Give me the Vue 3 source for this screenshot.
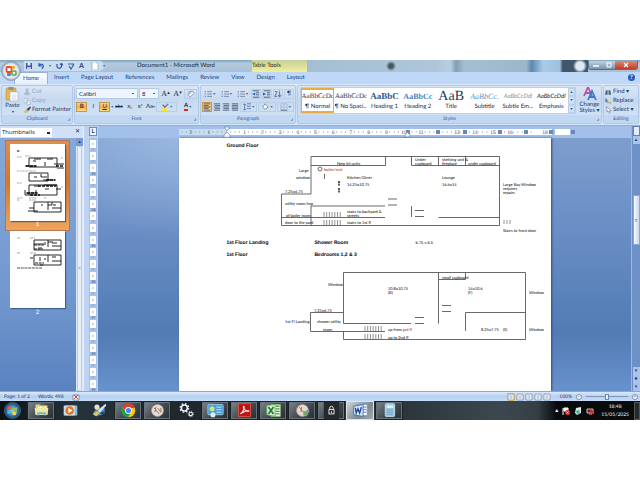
<script setup>
const tabs = ['Home', 'Insert', 'Page Layout', 'References', 'Mailings', 'Review', 'View', 'Design', 'Layout']

const styles = [
  { name: '¶ Normal', sample: 'AaBbCcDc', kind: 'plain', active: true },
  { name: '¶ No Spaci...', sample: 'AaBbCcDc', kind: 'plain' },
  { name: 'Heading 1', sample: 'AaBbC', kind: 'head1' },
  { name: 'Heading 2', sample: 'AaBbCc', kind: 'head2' },
  { name: 'Title', sample: 'AaB', kind: 'title' },
  { name: 'Subtitle', sample: 'AaBbCc.', kind: 'subtitle' },
  { name: 'Subtle Em...', sample: 'AaBbCcDdl', kind: 'subtle' },
  { name: 'Emphasis', sample: 'AaBbCcDdl', kind: 'emphasis' }
]

const range = (n) => Array.from({ length: n }, (_, i) => i)
const rulerNumbers = range(10).map((i) => ({ x: 48 + (i + 1) * 17.7, n: i + 1 }))
const rulerTail = [
  { x: 242, n: 11 }, { x: 278, n: 13 }, { x: 296, n: 14 }, { x: 314, n: 15 }, { x: 331, n: 16 }, { x: 366, n: 18 }
]
const rulerStops = [229, 259, 286, 321, 347, 372, 394]
const rulerTicks = range(80).map((i) => 3 + i * 4.42)

const verticalTicks = range(22).map((i) => ({ y: 2 + i * 12, n: i % 3 === 2 ? Math.floor(i / 3) + 13 : '' }))

const stairs = (x) => range(7).map((i) => x + i * 2.7)

const apps = [
  { name: 'File Explorer', lit: true, icon: '<path d="M3 3h5l1 1h8v11H3z" fill="#e9d98c"/><path d="M4 5h11v4H4z" fill="#fdf8d0"/><path d="M2 7h16l-1 8H3z" fill="#f3e6a0"/><path d="M5 12h10v4h-2v-2H7v2H5z" fill="#65b9dc"/><path d="M5 2v5M8 2v4M12 3v4" stroke="#8ccb74"/>' },
  { name: 'Media Player', icon: '<rect x="4" y="4" width="14" height="12" rx="1" fill="#8ebbd4"/><rect x="2" y="4" width="13" height="12" rx="1" fill="#c8dde8"/><circle cx="9" cy="10" r="5" fill="#e77421"/><path d="M7.500 7l5 3-5 3z" fill="#fff"/>' },
  { name: 'Paint Tools', icon: '<path d="M3 12q5-7 13-5v6q-7 5-13 2z" fill="#548bc0"/><path d="M2 14l5-3 3 2-4 4z" fill="#e8c64b"/><path d="M8 10L17 2l1 2-8 9z" fill="#d8e5f1"/><circle cx="7" cy="6" r="3" fill="#e8e3c5"/><path d="M10 13l6-2-2 4z" fill="#23456d"/>' },
  { name: 'Chrome', lit: true, icon: '<circle cx="10" cy="10" r="8" fill="#fbc116"/><path d="M3 6A8 8 0 0 1 17.500 7H10a3 3 0 0 0-3 4z" fill="#e23a2e"/><path d="M3 6A8 8 0 0 0 9.500 18l3.500-6H7z" fill="#229e4b"/><circle cx="10" cy="10" r="4" fill="#fff"/><circle cx="10" cy="10" r="3" fill="#4285f4"/>' },
  { name: 'Designer', lit: true, icon: '<circle cx="10" cy="10" r="7" fill="#e9e0d7" stroke="#b79c8a"/><path d="M6 7l6 7M7 12l1-6M10 7l4 5V7" stroke="#8d5c4b" fill="none"/>' },
  { name: 'Settings', icon: '<circle cx="7.500" cy="7" r="3.500" fill="none" stroke="#e4f1f7" stroke-width="1.800"/><circle cx="7.500" cy="7" r="5" fill="none" stroke="#e4f1f7" stroke-width="1.600" stroke-dasharray="2 1.930"/><circle cx="15" cy="14" r="2" fill="none" stroke="#e4f1f7" stroke-width="1.300"/><circle cx="15" cy="14" r="3.200" fill="none" stroke="#e4f1f7" stroke-dasharray="1.300 1.200"/>' },
  { name: 'Control Panel', lit: true, icon: '<rect x="1" y="3" width="18" height="12" rx="1" fill="#4a9bd5" stroke="#9bd2ef"/><circle cx="6" cy="8" r="3" fill="#c4e78b"/><path d="M11 6h6M11 9h6M11 12h6" stroke="#dff4ff"/><circle cx="7" cy="15" r="3" fill="#dceff8"/>' },
  { name: 'Reader', lit: true, icon: '<rect x="3" y="2" width="14" height="15" fill="#bd1515" stroke="#e25547"/><path d="M5 14c5-3 5-9 4-9s0 6 6 6c1-2-6 0-10 3z" fill="none" stroke="#fff" stroke-width="1.200"/>' },
  { name: 'Excel', lit: true, icon: '<path d="M7 3h11v14H7z" fill="#eef8e9" stroke="#8bbb7c"/><path d="M13 5h4M13 8h4M13 11h4M13 14h4" stroke="#4b9b43" stroke-width="1.500"/><path d="M2 4l10-1v14L2 15z" fill="#d9efcf" stroke="#56a552"/><path d="M4 6l6 8M10 6l-6 8" stroke="#257833" stroke-width="2"/>' },
  { name: 'Compass', lit: true, icon: '<circle cx="10" cy="10" r="7" fill="#e5dbd1" stroke="#b29882"/><path d="M6 6l6 7M8 12l1-6" stroke="#98664e" fill="none"/><path d="M11 11h3v-1l3 4-3 4v-2h-3z" fill="#6fac55"/><circle cx="16" cy="11" r="2" fill="#6e9bd4"/>' },
  { name: 'Password Safe', lit: true, icon: '<rect x="1" y="0" width="18" height="20" fill="#26292c"/><rect x="7" y="9" width="6" height="5" fill="none" stroke="#fff"/><path d="M8 9V7a2 2 0 0 1 4 0V9M10 11v2" fill="none" stroke="#fff"/>' },
  { name: 'Word', active: true, icon: '<path d="M7 3h11v13H7z" fill="#f5f9ff" stroke="#7795c8"/><path d="M13 6h4M13 9h4M13 12h4" stroke="#476fb6"/><path d="M2 5l11-2v14L2 15z" fill="#dce9fa" stroke="#3767af"/><path d="M4 7l1 6 2-5 2 5 2-7" stroke="#174b9a" stroke-width="1.600" fill="none"/>' },
  { name: 'Calculator', lit: true, icon: '<rect x="5" y="2" width="11" height="15" rx="1" fill="#9bc7e3" stroke="#c5e3f2"/><rect x="6.500" y="4" width="8" height="3" fill="#e1f2f9"/><path d="M7 9.500h7M7 12h7M7 14.500h7" stroke="#5084b2" stroke-dasharray="1.500 1"/>' }
]
</script>

<template>
  <div class="screen">
    <header class="titlebar">
      <button class="orb" aria-label="Office Button">
        <svg viewBox="0 0 20 20"><defs><radialGradient id="orbFill"><stop offset="0" stop-color="#fff" /><stop offset=".75" stop-color="#dde6f0" /><stop offset="1" stop-color="#8b9fbb" /></radialGradient></defs><circle cx="10" cy="10" r="9.500" fill="url(#orbFill)" stroke="#72869f" stroke-width=".5" /><rect x="5.500" y="6" width="5" height="5" rx="1" fill="none" stroke="#e2551f" stroke-width="1.800" /><rect x="11" y="5" width="3" height="3" rx="1" fill="#eda62c" /><rect x="6" y="12" width="4" height="3" rx="1" fill="#4a86ca" /><rect x="11" y="10" width="4" height="4" rx="1" fill="none" stroke="#63a143" stroke-width="1.500" /></svg>
      </button>
      <div class="quick">
        <button aria-label="Save"><svg viewBox="0 0 8 8"><path d="M1 1h6v6H1z" fill="#4353a4" /><path d="M2.500 1h3v2.500h-3z" fill="#e9efff" /><path d="M2 5h4v2H2z" fill="#b9c6ea" /></svg></button>
        <button aria-label="Undo"><svg viewBox="0 0 8 8"><path d="M2 1v3h3M2 4c2-4 6-1 3 3" fill="none" stroke="#3154ae" stroke-width="1.200" /></svg></button>
        <span class="tiny">▾</span>
        <button aria-label="Repeat"><svg viewBox="0 0 8 8"><path d="M2 2v2a2 2 0 0 0 4.500 0V2M5 2.500l1.500-1L8 3" fill="none" stroke="#3154ae" stroke-width="1.200" /></svg></button>
        <button aria-label="Spelling"><svg viewBox="0 0 8 8"><path d="M1 2h6M2 4l2 3 3-5" fill="none" stroke="#3360ae" stroke-width="1.200" /></svg></button>
        <button class="letter">A</button>
        <button class="doc" aria-label="New"><svg viewBox="0 0 8 8"><path d="M1 0h4l2 2v6H1z" fill="#fff" stroke="#8293a8" stroke-width=".6" /></svg></button>
        <span class="tiny">▾</span>
      </div>
      <h1>Document1 - Microsoft Word</h1>
      <div class="context">Table Tools</div>
      <div class="backdrop" />
      <div class="winbtns">
        <button aria-label="Minimise"><svg viewBox="0 0 10 8"><path d="M2 5h6" stroke="#fff" stroke-width="1.500" /></svg></button>
        <button aria-label="Restore"><svg viewBox="0 0 10 8"><path d="M3 2h4v4H3z" fill="none" stroke="#fff" /></svg></button>
        <button class="close" aria-label="Close"><svg viewBox="0 0 10 8"><path d="M3 2l4 4M7 2L3 6" stroke="#fff" stroke-width="1.200" /></svg></button>
      </div>
    </header>

    <nav class="tabs">
      <button v-for="(t, i) in tabs" :key="t" :class="{ on: i === 0 }">{{ t }}</button>
      <button class="help" aria-label="Help">?</button>
    </nav>

    <section class="ribbon">
      <div class="group clipboard">
        <div class="body">
          <button class="paste">
            <svg viewBox="0 0 14 16"><rect x="1" y="2" width="10" height="12" rx="1" fill="#e9b650" stroke="#b98937" stroke-width=".6" /><rect x="3.500" y="1" width="5" height="3" fill="#8390a5" /><path d="M5 6h8v9H5z" fill="#fff" stroke="#9eb0cc" stroke-width=".6" /><path d="M6.500 9h5M6.500 11h5M6.500 13h5" stroke="#a9bbd6" stroke-width=".6" /></svg>
            <span>Paste</span><i>▾</i>
          </button>
          <div class="stack">
            <button class="dim"><svg viewBox="0 0 8 8"><path d="M2 0l3 5M5 0L2 5" stroke="#9ba9bb" /><circle cx="2" cy="6" r="1.200" fill="none" stroke="#9ba9bb" /><circle cx="5" cy="6" r="1.200" fill="none" stroke="#9ba9bb" /></svg>Cut</button>
            <button class="dim"><svg viewBox="0 0 8 8"><path d="M0 1h4v5H0zM3 3h4v5H3z" fill="#e6edf6" stroke="#a6b5c9" stroke-width=".7" /></svg>Copy</button>
            <button><svg viewBox="0 0 8 8"><path d="M0 6l3-3 2 2-3 3z" fill="#edb93e" /><path d="M3 3l4-3 1 1-3 4z" fill="#39424f" /></svg>Format Painter</button>
          </div>
        </div>
        <footer>Clipboard<b>⌟</b></footer>
      </div>

      <div class="group font">
        <div class="body rows">
          <div class="row">
            <select class="family" aria-label="Font"><option>Calibri</option></select>
            <select class="size" aria-label="Font size"><option>8</option></select>
            <button class="serif">A<sup>▴</sup></button><button class="serif">A<sup>▾</sup></button><button class="edge" aria-label="Clear formatting"><svg viewBox="0 0 10 10"><path d="M1 6l5-5 3 3-5 5z" fill="#eaf0fa" stroke="#7f91b3" /><path d="M2 2h4M1 4h3" stroke="#7f91b3" /></svg></button>
          </div>
          <div class="row tools">
            <button class="hot"><b>B</b></button><button><em>I</em></button><button class="hot"><u>U</u></button><span class="tiny">▾</span><button><s>abc</s></button><button>x<sub>₂</sub></button><button>x<sup>²</sup></button><button>Aa<span class="tiny">▾</span></button>
            <button class="wide edge" aria-label="Highlight"><svg viewBox="0 0 10 10"><path d="M1 7h7v3H1z" fill="#ffe619" /><path d="M2 2l3 3M4 6l5-5" stroke="#5b6d86" stroke-width="1.500" /></svg><span class="tiny">▾</span></button><button class="wide"><span class="ink">A</span><span class="tiny">▾</span></button>
          </div>
        </div>
        <footer>Font<b>⌟</b></footer>
      </div>

      <div class="group para">
        <div class="body rows">
          <div class="row">
            <button v-for="n in 3" :key="n" class="wide" aria-label="List"><svg viewBox="0 0 10 10"><path d="M4 2h6M4 5h6M4 8h6" stroke="#65789b" /><path d="M1 2h1M1 5h1M1 8h1" stroke="#3858b4" stroke-width="1.500" /></svg><span class="tiny">▾</span></button>
            <button v-for="n in 2" :key="'d' + n" class="edge" aria-label="Indent"><svg viewBox="0 0 10 10"><path d="M1 1h8M5 3.500h4M5 6h4M1 9h8" stroke="#2f4465" /><path :d="n === 1 ? 'M4 3v4L0 5z' : 'M0 3v4l4-2z'" fill="#2d5dbf" /></svg></button>
            <button class="edge" aria-label="Sort"><svg viewBox="0 0 10 10"><path d="M1 2h3L1 8h3M7 1v7M5 6l2 3 2-3" fill="none" stroke="#455fa2" /></svg></button>
            <button class="edge">¶</button>
          </div>
          <div class="row">
            <button v-for="n in 4" :key="'a' + n" :class="{ hot: n === 1 }" aria-label="Align"><svg viewBox="0 0 10 10"><path d="M1 1h8M1 3h8M1 5h8M1 7h8M1 9h8" stroke="#3d5071" /><path v-if="n < 4" :d="n === 1 ? 'M7 3h2M7 7h2' : 'M1 3h1M1 7h1'" stroke="#dce8f7" stroke-width="1.300" /></svg></button>
            <button class="wide edge" aria-label="Line spacing"><svg viewBox="0 0 10 10"><path d="M5 1h5M5 4h5M5 7h5M2 1v8M0 3l2-2 2 2M0 7l2 2 2-2" fill="none" stroke="#4d6eaa" /></svg><span class="tiny">▾</span></button>
            <button class="wide edge" aria-label="Shading"><svg viewBox="0 0 10 10"><path d="M2 5l3-4 4 4-4 3z" fill="#fff" stroke="#667b9b" /></svg><span class="tiny">▾</span></button>
            <button class="wide edge" aria-label="Borders"><svg viewBox="0 0 10 10"><path d="M1 1h8v8H1zM5 1v8M1 5h8" fill="none" stroke="#899abc" stroke-dasharray="1 1" /><path d="M1 9h8" stroke="#4e5e75" /></svg><span class="tiny">▾</span></button>
          </div>
        </div>
        <footer>Paragraph<b>⌟</b></footer>
      </div>

      <div class="group styles">
        <div class="body">
          <div class="gallery">
            <button v-for="s in styles" :key="s.name" :class="[s.kind, { on: s.active }]"><span class="sample">{{ s.sample }}</span><span class="label">{{ s.name }}</span></button>
            <div class="spin"><button>▴</button><button>▾</button><button>▾</button></div>
          </div>
          <button class="change"><svg viewBox="0 0 14 14"><path d="M1 9L5 0l4 9M2.500 6h5" fill="none" stroke="#b552a8" stroke-width="1.800" /><path d="M5 13L9 4l4 9M6.500 10h5" fill="none" stroke="#4778c8" stroke-width="1.800" /></svg><span>Change</span><span>Styles ▾</span></button>
        </div>
        <footer>Styles<b>⌟</b></footer>
      </div>

      <div class="group editing">
        <div class="body">
          <div class="stack">
            <button><svg viewBox="0 0 8 8"><path d="M0 7l1-5h2v5zM4 7V2h2l1 5z" fill="#4d6281" /></svg>Find ▾</button>
            <button><svg viewBox="0 0 8 8"><path d="M1 1v4h3M1 3h2" fill="none" stroke="#405f93" /><path d="M4 5h3v2H4z" fill="#e2ae37" /></svg>Replace</button>
            <button><svg viewBox="0 0 8 8"><path d="M2 0v6l1.500-1L5 8l1-1-1-2h2z" fill="#fff" stroke="#5c7395" stroke-width=".7" /></svg>Select ▾</button>
          </div>
        </div>
        <footer>Editing</footer>
      </div>
    </section>

    <main class="work">
      <aside class="thumbs">
        <div class="thumbhead"><select aria-label="Pane"><option>Thumbnails</option></select><button aria-label="Close pane">✕</button></div>
        <div class="thumbbody">
          <div class="pages">
            <button class="thumb on">
              <svg viewBox="0 0 55 77">
                <g fill="none" stroke="#111" stroke-width=".9">
                  <path d="M19 14h28v9H19zM24 15h7M37 15h6M23 17h3M35 18v4M15 22h12M44 20h10M47 24h7" /><path d="M19 29h19v8H19zM31 30v3h6M24 33h3M33 36h13M39 35v2" /><path d="M19 41h28v10H19zM24 42h5M34 41h13M15 46v5h4M16 49h12M35 45h4M46 45h5M26 46v3" /><path d="M24 58h27v10H24zM38 58v8M38 61h4v-3M42 64h9M19 64h5M18 67h10M31 61h2M43 61h3" />
                </g>
                <g stroke="#555" stroke-width="1" stroke-dasharray="2 .6"><path d="M7 7h3" stroke="#000" /><path d="M7 13h5M15 12h6M7 27h19M7 39h5M7 54h6M19 54h8M34 54h3M7 56h3M19 56h7M51 14h2M51 43h2" stroke-width=".5" /></g>
                <g stroke="#111" stroke-width="1.600" stroke-dasharray="3 1"><path d="M16 22h10M17 49h10M28 42h18M36 36h9M46 22h7M20 51h10" /></g>
              </svg><span>1</span>
            </button>
            <button class="thumb">
              <svg viewBox="0 0 55 77"><g fill="none" stroke="#111" stroke-width=".9"><path d="M24 9h27v10H24zM38 9v7M38 11h5M42 15h9M24 13h10M28 17h4M35 11v3M42 12h5" /><path d="M24 24h27v10H24zM38 24v7M42 30h9M30 26v4M34 28h2M20 27h3M42 26h4" /></g><g stroke="#222" stroke-width="1.200" stroke-dasharray="3 .7"><path d="M24 14h10M24 18h9M25 32h9M30 34h4" /><path d="M7 7h4M20 7h5M7 22h3M20 22h6" stroke-width=".4" /><path d="M7 37h25" stroke-width=".8" /></g></svg><span>2</span>
            </button>
          </div>
          <div class="bar"><i>▴</i><div class="grip">≡</div></div>
        </div>
      </aside>

      <div class="vruler">
        <div class="corner">L</div>
        <svg viewBox="0 0 8 253"><rect width="8" height="253" fill="#a9c3e8" /><g v-for="t in verticalTicks" :key="t.y"><rect x="1" :y="t.y" width="6" height="8" fill="#fff" /><path :d="`M3 ${t.y + 4}h2M3 ${t.y + 9}h2`" stroke="#7488aa" stroke-width=".7" /><text x="2" :y="t.y + 11" font-size="4" fill="#445b80">{{ t.n }}</text></g></svg>
      </div>

      <section class="editor">
        <div class="hruler">
          <svg viewBox="0 0 396 12">
            <rect y="3" width="48" height="6" fill="#cadcf2" /><rect x="48" y="3" width="325" height="6" fill="#fff" /><rect x="376" y="3" width="15" height="6" fill="#fff" />
            <path v-for="x in rulerTicks" :key="x" :d="`M${x} 5v2`" stroke="#8d9bb3" stroke-width=".6" />
            <g font-size="5" fill="#45516a" text-anchor="middle"><text x="12" y="8">2</text><text x="30" y="8">1</text><text v-for="r in [...rulerNumbers, ...rulerTail]" :key="r.n" :x="r.x" y="8" stroke="#fff" stroke-width="1.500" paint-order="stroke">{{ r.n }}</text></g>
            <rect v-for="x in rulerStops" :key="x" :x="x - 2" y="4" width="4" height="4" fill="#6d86b2" />
            <path d="M45 1h6L48 5zM48 6l3 3v3h-6V9zM226 9l2-3 3 3v2h-5z" fill="#eef4fc" stroke="#6e86ae" stroke-width=".7" />
          </svg>
        </div>
        <div class="canvas">
          <article class="page">
            <h2>Ground Floor</h2>
            <svg class="plan" viewBox="227 151 323 86">
              <g class="ln"><path d="M311 194V156.500h188.500V225.500H281.500V194H311" /><path d="M311 165.500h74.500v-9M411.500 156.500v9h88M438.500 156.500v9M465.500 156.500v9M281.500 217.500H385M311 225.500V206H385M388 199h9M388 205h9M411.500 206v11M415 210.500h9M415 216.500h9M438.500 217.500h61M324.500 174v5" /><circle cx="320" cy="169" r="2" /></g>
              <path class="stairs" v-for="x in stairs(324)" :key="x" :d="`M${x} 212v5M${x} 220v5`" />
              <path class="stairs" d="M504 220v4M507 220v4M510 220v4" />
              <g><text x="299" y="172">Large</text><text x="296" y="179">window</text><text x="285" y="193">7.25x6.75</text><text x="285" y="205">utility room/top</text><text x="286" y="217">of boiler room</text><text x="285" y="224">door to the yard</text><text x="337" y="165">New kit units</text><text class="red" x="324" y="171">boiler/sink</text><text x="347" y="179">Kitchen/Diner</text><text x="347" y="186">14.25x10.75</text><text x="347" y="213">stairs to backyard &amp;</text><text x="347" y="217">streets</text><text x="347" y="224">stairs to 1st fl</text><text x="415" y="161">Under</text><text x="415" y="165">cupboard</text><text x="442" y="161">shelving unit &amp;</text><text x="442" y="165">fireplace</text><text x="468" y="165">under cupboard</text><text x="442" y="179">Lounge</text><text x="442" y="186">16.6x14</text><text x="503" y="186">Large Bay Window</text><text x="503" y="190">requires</text><text x="503" y="194">repairs</text><text x="503" y="232">Stairs to front door</text></g>
              <path d="M339 181v5M339 188v5" stroke="#222" stroke-width="1.500" stroke-dasharray="2 .5" />
            </svg>
            <div class="line"><h2>1st Floor Landing</h2><h2>Shower Room</h2><p>6.75 x 6.5</p></div>
            <div class="line"><h2>1st Floor</h2><h2>Bedrooms 1,2 &amp; 3</h2></div>
            <svg class="plan" viewBox="227 268 323 76">
              <g class="ln"><path d="M411 323.500H343.500V272.500H525.500V339.500H343.500V331.500M343.500 312.500H310.500V331.500H385M438.500 272.500v51M438.500 279.500h27v-7M465.500 331V312.500h60M415 317.500h9M415 323.500h9M442 305.500h9M442 311.500h9" /></g>
              <path class="stairs" v-for="x in stairs(365)" :key="x" :d="`M${x} 326v5M${x} 334v5`" />
              <g><text x="328" y="286">Window</text><text x="314" y="312">7.25x6.75</text><text x="285" y="323">1st Fl Landing</text><text x="317" y="323">shower utility</text><text x="323" y="331">room</text><text x="388" y="290">10.8x10.75</text><text x="388" y="294">(B)</text><text x="388" y="331">up from <tspan class="red">grd fl</tspan></text><text x="388" y="339">up to 2nd fl</text><text x="442" y="279">small cupboard</text><text x="468" y="290">14x10.6</text><text x="468" y="294">(F)</text><text x="481" y="331">8.25x7.75</text><text x="503" y="331">(S)</text><text x="529" y="294">Window</text><text x="529" y="331">Window</text></g>
            </svg>
          </article>
        </div>
      </section>
      <div class="bar right"><i class="view" /><i>▴</i><div class="grip">≡</div><i>▾</i><i>●</i><i>▾</i></div>
    </main>

    <footer class="status">
      <span>Page: 1 of 2</span><span>Words: 498</span>
      <svg viewBox="0 0 8 8"><path d="M1 2h6v5H1z" fill="#fff" stroke="#627ca7" stroke-width=".8" /><path d="M2 2l4 4M6 2L2 6" stroke="#cf3d35" /></svg>
      <div class="views"><button v-for="n in 5" :key="n" :class="{ hot: n === 1 }" aria-label="View"><svg viewBox="0 0 8 8"><path d="M1 1h6v6H1z" fill="#f8fbff" stroke="#7184a4" stroke-width=".7" /><path d="M2.500 3h3M2.500 5h3" stroke="#7184a4" stroke-width=".7" /></svg></button></div>
      <div class="zoom"><label for="zoomRange">100%</label><button aria-label="Zoom out">−</button><input id="zoomRange" type="range"><button aria-label="Zoom in">+</button></div>
    </footer>

    <footer class="taskbar">
      <button class="start" aria-label="Start"><svg viewBox="0 0 20 20"><defs><radialGradient id="startFill"><stop offset="0" stop-color="#9ed8ed" /><stop offset=".7" stop-color="#2d76a9" /><stop offset="1" stop-color="#123a5e" /></radialGradient></defs><circle cx="10" cy="10" r="9.500" fill="url(#startFill)" stroke="#7aa5bc" stroke-width=".5" /><path d="M4 6q3-2 5 0v3q-2-1.500-5 0z" fill="#f25a29" /><path d="M10 6q3 2 6 0l-1 4q-3 1-5-.500z" fill="#90c83e" /><path d="M4 10.500q3-1.500 5 0v4q-2-2-5-.500z" fill="#55b5eb" /><path d="M10 11q3 1.500 5 0l-1 4q-2 1-4 0z" fill="#ffd23c" /></svg></button>
      <button v-for="a in apps" :key="a.name" class="app" :class="{ lit: a.lit, active: a.active }" :aria-label="a.name"><svg viewBox="0 0 20 20" v-html="a.icon" /></button>
      <div class="tray">
        <span>▴</span>
        <svg viewBox="0 0 8 8"><path d="M1 1v7M2 1h4v3H2z" stroke="#fff" fill="#fff" /><circle cx="5.500" cy="5.500" r="2.500" fill="#d23128" /><path d="M4.500 4.500l2 2M6.500 4.500l-2 2" stroke="#fff" stroke-width=".7" /></svg>
        <svg viewBox="0 0 8 8"><path d="M2 1l5-1v6L3 8 1 6z" fill="#d9efe8" /><circle cx="4" cy="5" r="2" fill="#56b697" /></svg>
        <svg viewBox="0 0 8 8"><path d="M1 2h6v4H1zM3 7h3" fill="#711c23" stroke="#e7e7e7" stroke-width=".8" /><path d="M4 3l4 4M8 3L4 7" stroke="#ed2835" stroke-width="1.300" /></svg>
        <time>18:48<br>15/05/2025</time>
        <button class="peek" aria-label="Show desktop" />
      </div>
    </footer>
  </div>
</template>

<style>
body { margin: 0; background: #fff; }
</style>

<style scoped>
.screen { box-sizing: border-box; min-height: 100vh; padding: 60px 0; display: flex; flex-direction: column; font: 6px/8px Lato, "Open Sans", sans-serif; text-rendering: geometricPrecision; color: #1d3a69; }
.screen * { box-sizing: border-box; }
button { font: inherit; color: inherit; background: none; border: 0; padding: 0; margin: 0; white-space: nowrap; text-rendering: inherit; }
select { font: inherit; }
svg { display: block; }
h1, h2, p { margin: 0; font: inherit; }
.tiny { font-size: 4px; color: #4a5d7c; }

.titlebar { position: relative; height: 12px; display: flex; align-items: center; padding-left: 24px; background: linear-gradient(#7ea5bc, #b4cadf 30%, #a8bfd5); }
.orb { position: absolute; left: 1px; top: 1px; width: 20px; height: 20px; z-index: 2; }
.orb svg { width: 20px; height: 20px; }
.quick { display: flex; align-items: center; gap: 4px; width: 80px; height: 10px; padding: 0 1px; border-radius: 0 5px 5px 0; background: #cbdcee; }
.quick svg { width: 8px; height: 8px; }
.quick .letter { color: #1f3a77; font-size: 7px; font-weight: 700; }
.quick .doc { margin-left: 3px; }
h1 { width: 148px; padding-right: 4px; text-align: center; color: #16273d; }
.context { width: 55px; height: 12px; line-height: 12px; background: linear-gradient(#c5cf9b, #f4ee9c); color: #2b3218; }
.backdrop { flex: 1; height: 12px; background: radial-gradient(circle at 84px 6px, #46545f 2px, transparent 5px), radial-gradient(circle at 273px 6px, #dfe9f0 4px, transparent 7px), linear-gradient(90deg, #a3bed2 0, #afc6da 46%, #b9cfdf 51%, #819fb5 53%, #a5bfd2 56%, #9cb7cb 78%, #5b88b2 80%, #a9cbe6 84%, #9dc0dc 90%, #3f566d 91%, #42566b); }
.winbtns { display: flex; align-self: flex-start; margin-top: 1px; margin-right: 2px; border-radius: 0 0 3px 3px; overflow: hidden; border: 1px solid #53708d; border-top: 0; }
.winbtns button { width: 13px; height: 8px; background: linear-gradient(#c2d2df, #7894ae); }
.winbtns .close { width: 22px; background: linear-gradient(#dc8a78, #c23a25); }
.winbtns svg { width: 10px; height: 8px; margin: auto; }

.tabs { display: flex; align-items: stretch; height: 12px; padding: 0 5px 0 14px; background: #bfd8f8; color: #1b4380; }
.tabs button { padding: 0 6px; }
.tabs .on { width: 34px; background: linear-gradient(#fff, #e3eefb); border: 1px solid #92b0d8; border-bottom: 0; border-radius: 2px 2px 0 0; padding: 0; }
.tabs .help { margin: 2px 0 0 auto; width: 7px; height: 7px; line-height: 7px; padding: 0; border-radius: 50%; background: #2c5bb5; color: #fff; font-weight: 700; }

.ribbon { display: flex; gap: 1px; height: 42px; padding: 1px; background: linear-gradient(#dbe8f7, #c6d9f0 40%, #d6e6f8); border-bottom: 1px solid #90b0da; }
.group { display: flex; flex-direction: column; border: 1px solid #b1c8e6; border-radius: 2px; overflow: hidden; }
.body { flex: 1; display: flex; min-height: 0; }
.group > footer { position: relative; height: 8px; font-size: 5px; line-height: 8px; text-align: center; background: #c1d8f2; color: #34599a; }
.group > footer b { position: absolute; right: 2px; }
.clipboard { width: 72px; }
.font { width: 125px; }
.para { width: 96px; }
.styles { flex: 1; min-width: 0; }
.editing { width: 36px; }
.paste { width: 24px; display: flex; flex-direction: column; align-items: center; }
.paste svg { width: 14px; height: 16px; }
.paste i { font-size: 4px; line-height: 4px; }
.stack { display: flex; flex-direction: column; justify-content: space-around; padding: 1px; }
.stack button { display: flex; align-items: center; gap: 1px; }
.stack svg { width: 7px; height: 8px; }
.dim { color: #98a8bd; }
.rows { flex-direction: column; justify-content: space-around; padding: 1px; }
.row { display: flex; align-items: center; gap: 1px; height: 12px; }
.row button { flex: 1; height: 10px; display: flex; align-items: center; justify-content: center; color: #1c3050; }
.row .wide { flex: 2; gap: 1px; }
.row svg { width: 8px; height: 8px; }
.row .edge { border: 1px solid #bacee8; }
.row .hot { background: linear-gradient(#fad298, #f5a849 50%, #fce28e); border: 1px solid #c2964b; }
.row .family, .row .size { appearance: none; height: 11px; border: 1px solid #b2c9e8; background: linear-gradient(#445c84, #445c84) right 3px center / 2px 1px no-repeat #eef5fd; padding: 0 2px; color: #1a2b45; }
.row .family { width: 62px; }
.row .size { width: 20px; }
.row .serif { font-family: "Liberation Serif", serif; font-size: 8px; }
.row sup, .row sub, .row s { font-size: 5px; line-height: 5px; }
.ink { border-bottom: 2px solid #e4251b; line-height: 6px; font-weight: 700; }
.gallery { flex: 1; display: flex; min-width: 0; margin: 1px 2px; background: #fff; border: 1px solid #b9cfea; }
.gallery > button { flex: 1; min-width: 0; overflow: hidden; display: flex; flex-direction: column; justify-content: space-between; align-items: center; border: 2px solid transparent; border-width: 2px 1px; color: #1c2a44; }
.gallery > .on { border-color: #e9ad42; }
.sample { line-height: 13px; font-family: "Liberation Serif", serif; font-size: 7px; }
.label { line-height: 8px; }
.head1 .sample { font-size: 9px; font-weight: 700; color: #305b8d; }
.head2 .sample { font-size: 8px; font-weight: 700; color: #5083bd; }
.title .sample { font-size: 14px; color: #22364f; }
.subtitle .sample { font-style: italic; font-size: 8px; color: #6b93c4; }
.subtle .sample { font-style: italic; font-family: Lato, sans-serif; font-size: 6px; color: #8f8f8f; }
.emphasis .sample { font-style: italic; font-family: Lato, sans-serif; font-size: 6px; color: #222; }
.spin { width: 7px; display: flex; flex-direction: column; background: #cfe0f5; }
.spin button { flex: 1; font-size: 4px; line-height: 4px; border: 1px solid #b9cfea; }
.change { width: 23px; line-height: 6px; display: flex; flex-direction: column; align-items: center; }
.change svg { width: 14px; height: 14px; margin: 1px 0; }

.work { flex: 1; display: flex; min-height: 0; background: radial-gradient(ellipse at 30% 0, #9dbae2 0, transparent 30%), linear-gradient(#7f9fce, #6c90c6 35%, #527bb4 78%, #6892cc); }
.thumbs { width: 84px; display: flex; flex-direction: column; border-right: 1px solid #e6effa; }
.thumbhead { height: 12px; display: flex; justify-content: space-between; align-items: center; padding: 0 3px 0 1px; background: #d0e1f7; color: #1c2c48; }
.thumbhead select { width: 51px; height: 9px; padding: 0 1px; border: 0; color: #111; font-family: "Open Sans", sans-serif; appearance: none; background: linear-gradient(#223, #223) 46px 4px / 3px 2px no-repeat #fff; }
.thumbbody { flex: 1; display: flex; min-height: 0; }
.pages { flex: 1; padding: 2px 6px 0 5px; background: linear-gradient(#86a8da, #7298cf 60%, #5a82bf); }
.thumb { display: flex; flex-direction: column; align-items: center; width: 65px; height: 87px; padding: 0; color: #fff; line-height: 10px; }
.thumb.on { height: 91px; padding-top: 3px; background: linear-gradient(#dc8e51, #d67526 45%, #eda45d); border: 1px solid #b5774b; }
.thumb svg { width: 55px; height: 77px; background: #fff; box-shadow: 1px 1px 1px #3d5f91; }
.thumb.on span { height: 8px; line-height: 8px; }
.bar { width: 7px; display: flex; flex-direction: column; align-items: center; background: #dce7f6; color: #263c66; }
.bar i { width: 7px; height: 8px; line-height: 8px; text-align: center; font-size: 5px; font-style: normal; background: #7a9bcc; }
.thumbs .grip { flex: 1; width: 5px; display: flex; align-items: center; justify-content: center; background: #e7eefa; border: 1px solid #bdcde6; font-size: 5px; color: #7084a8; }
.vruler { width: 14px; padding: 1px 1px 0 5px; background: #bed3f1; display: flex; flex-direction: column; }
.corner { flex: none; width: 8px; height: 9px; margin-bottom: 2px; border: 1px solid #718eba; background: #eef5ff; line-height: 7px; text-align: center; font-weight: 700; }
.vruler svg { width: 8px; height: 253px; font-family: "Liberation Sans", sans-serif; }
.editor { flex: 1; min-width: 0; display: flex; flex-direction: column; }
.hruler { height: 12px; display: flex; justify-content: center; background: #a3c0ea; font-family: "Liberation Sans", sans-serif; }
.hruler svg { width: 396px; height: 12px; margin-right: -24px; }
.canvas { flex: 1; display: flex; justify-content: center; min-height: 0; }
.page { width: 372px; padding: 4px 0 0 48px; background: #fff; box-shadow: 1px 0 2px #294e83; color: #000; font-family: "Liberation Sans", sans-serif; }
.page h2 { font-size: 5px; font-weight: 700; line-height: 9px; }
.plan { width: 323px; height: auto; overflow: visible; }
.ln { fill: none; stroke: #444; stroke-width: .8; }
.stairs { stroke: #777; stroke-width: .8; fill: none; }
.plan text { font-family: Lato, sans-serif; font-size: 4px; fill: #000; }
.plan .red { fill: #a02020; }
.line { display: grid; grid-template-columns: 88px 101px 1fr; height: 12px; align-items: center; }
.line p { font-size: 4px; }
.line + .plan { margin-top: 7px; }
.right { width: 9px; background: #6d91c6; border-left: 1px solid #9bb8e4; }
.right i { background: #a9c3e9; }
.right .view { height: 10px; border: 1px solid #6682ad; background: #e4edf9; }
.right .grip { width: 7px; height: 50px; margin: 51px 0 auto; line-height: 50px; text-align: center; font-size: 5px; background: linear-gradient(90deg, #f7faff, #c8d8ef); border: 1px solid #8da8d0; }

.status { height: 10px; display: flex; align-items: center; gap: 8px; padding-left: 4px; font-size: 5px; background: linear-gradient(#dceafb, #b6d0f1 50%, #c6dcf7); border-top: 1px solid #85a8d8; }
.status > svg { width: 8px; height: 8px; }
.views { display: flex; margin-left: auto; gap: 1px; }
.views button { width: 8px; }
.views svg { width: 8px; height: 8px; }
.views .hot { background: #f8c760; }
.zoom { display: flex; align-items: center; gap: 4px; padding-right: 2px; }
.zoom button { width: 6px; height: 6px; border: 1px solid #7890b5; border-radius: 50%; line-height: 4px; background: #fff; }
.zoom input { appearance: none; width: 42px; height: 1px; margin: 0; background: #7f96ba; }
.zoom input::-webkit-slider-thumb { appearance: none; width: 4px; height: 6px; background: #e9f1fb; border: 1px solid #6f88ad; }

.taskbar { height: 19px; display: flex; align-items: center; gap: 1px; background: linear-gradient(90deg, #0c1114, #25333c 12%, #20262b 30%, #29343b 62%, #3c4850 78%, #343e45 84%, #080a0c 87%, #090b0d); }
.start { width: 26px; padding-left: 4px; }
.start svg { width: 17px; height: 17px; }
.app { width: 28px; height: 19px; display: flex; align-items: center; justify-content: center; }
.app svg { width: 17px; height: 17px; }
.lit { background: linear-gradient(135deg, #7c878c, #454e54 50%, #252d33); border: 1px solid #1b2125; box-shadow: inset 0 0 0 1px #687177; }
.active { background: linear-gradient(135deg, #d0d5d9, #7e8991 60%, #a0aab0); border: 1px solid #dce2e5; }
.tray { margin-left: auto; display: flex; align-items: center; gap: 4px; color: #fff; }
.tray svg { width: 8px; height: 8px; }
.tray time { margin: 0 1px 0 3px; font-size: 5px; text-align: center; }
.peek { width: 6px; height: 18px; background: #252a2d; border: 1px solid #4f585d; }
</style>
